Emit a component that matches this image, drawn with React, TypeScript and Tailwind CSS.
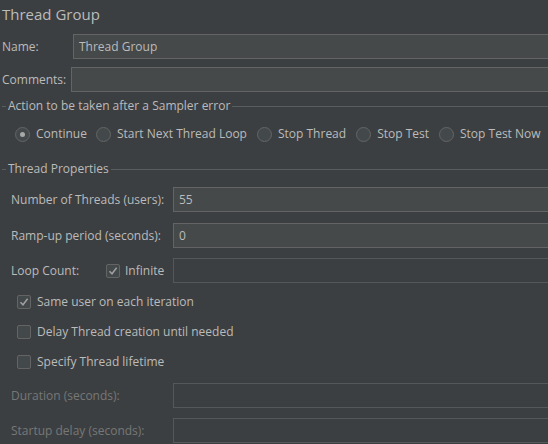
import React from "react";

const Field = ({ value = "", disabled = false }: { value?: string; disabled?: boolean }) => (
  <div
    className={
      "flex-1 h-[25px] border border-r-0 flex items-center pl-[5px] " +
      (disabled ? "border-[#555859] bg-[#3c3f41]" : "border-[#646464] bg-[#45494a]")
    }
  >
    <span className="text-[#bbbbbb]">{value}</span>
  </div>
);

const Radio = ({ checked = false }: { checked?: boolean }) => (
  <div className="w-[15px] h-[15px] rounded-full border border-[#646464] bg-[#43494a] flex items-center justify-center shrink-0">
    {checked && <div className="w-[5px] h-[5px] rounded-full bg-[#a8a8a8]" />}
  </div>
);

const Check = ({ checked = false }: { checked?: boolean }) => (
  <div className="w-[14px] h-[14px] rounded-[2px] border border-[#646464] bg-[#43494a] flex items-center justify-center shrink-0">
    {checked && (
      <svg width="10" height="10" viewBox="0 0 10 10">
        <path d="M1.5 5.2 L4 7.8 L8.6 1.8" fill="none" stroke="#a0a0a0" strokeWidth="1.5" />
      </svg>
    )}
  </div>
);

const GroupTitle = ({ text }: { text: string }) => (
  <div className="flex items-center h-[14px]">
    <div className="w-[4px] ml-[2px] h-px bg-[#5a5d5e]" />
    <span className="px-[2px] text-[#bbbbbb] leading-[14px]">{text}</span>
    <div className="flex-1 h-px bg-[#5a5d5e]" />
  </div>
);

export default function App() {
  return (
    <div
      className="w-[548px] h-[444px] bg-[#3c3f41] overflow-hidden text-[12px] text-[#bbbbbb]"
      style={{ fontFamily: '"Open Sans", "Noto Sans", sans-serif' }}
    >
      <div className="pl-[2px] pt-[3px] h-[34px] text-[15px] leading-[22px]">Thread Group</div>

      <div className="flex items-center h-[25px]">
        <div className="w-[73px] pl-[2px]">Name:</div>
        <Field value="Thread Group" />
      </div>

      <div className="flex items-center h-[25px] mt-[8px]">
        <div className="w-[71px] pl-[2px]">Comments:</div>
        <Field />
      </div>

      <div className="mt-[7px]">
        <GroupTitle text="Action to be taken after a Sampler error" />
      </div>

      <div className="flex items-center h-[20px] mt-[11px] pl-[15px]">
        <Radio checked />
        <span className="ml-[6px] mr-[9px]">Continue</span>
        <Radio />
        <span className="ml-[6px] mr-[10px]">Start Next Thread Loop</span>
        <Radio />
        <span className="ml-[6px] mr-[10px]">Stop Thread</span>
        <Radio />
        <span className="ml-[6px] mr-[10px]">Stop Test</span>
        <Radio />
        <span className="ml-[6px]">Stop Test Now</span>
      </div>

      <div className="mt-[18px]">
        <GroupTitle text="Thread Properties" />
      </div>

      <div className="flex items-center h-[25px] mt-[11px]">
        <div className="w-[173px] pl-[11px]">Number of Threads (users):</div>
        <Field value="55" />
      </div>

      <div className="flex items-center h-[25px] mt-[11px]">
        <div className="w-[173px] pl-[11px]">Ramp-up period (seconds):</div>
        <Field value="0" />
      </div>

      <div className="flex items-center h-[25px] mt-[10px]">
        <div className="w-[106px] pl-[11px]">Loop Count:</div>
        <div className="w-[67px] flex items-center">
          <Check checked />
          <span className="ml-[5px]">Infinite</span>
        </div>
        <Field disabled />
      </div>

      <div className="flex items-center h-[20px] mt-[9px] pl-[17px]">
        <Check checked />
        <span className="ml-[6px]">Same user on each iteration</span>
      </div>

      <div className="flex items-center h-[20px] mt-[10px] pl-[17px]">
        <Check />
        <span className="ml-[6px]">Delay Thread creation until needed</span>
      </div>

      <div className="flex items-center h-[20px] mt-[10px] pl-[17px]">
        <Check />
        <span className="ml-[6px]">Specify Thread lifetime</span>
      </div>

      <div className="flex items-center h-[25px] mt-[11px]">
        <div className="w-[173px] pl-[11px] text-[#777777]">Duration (seconds):</div>
        <Field disabled />
      </div>

      <div className="flex items-center h-[25px] mt-[10px]">
        <div className="w-[173px] pl-[11px] text-[#777777]">Startup delay (seconds):</div>
        <Field disabled />
      </div>
    </div>
  );
}
